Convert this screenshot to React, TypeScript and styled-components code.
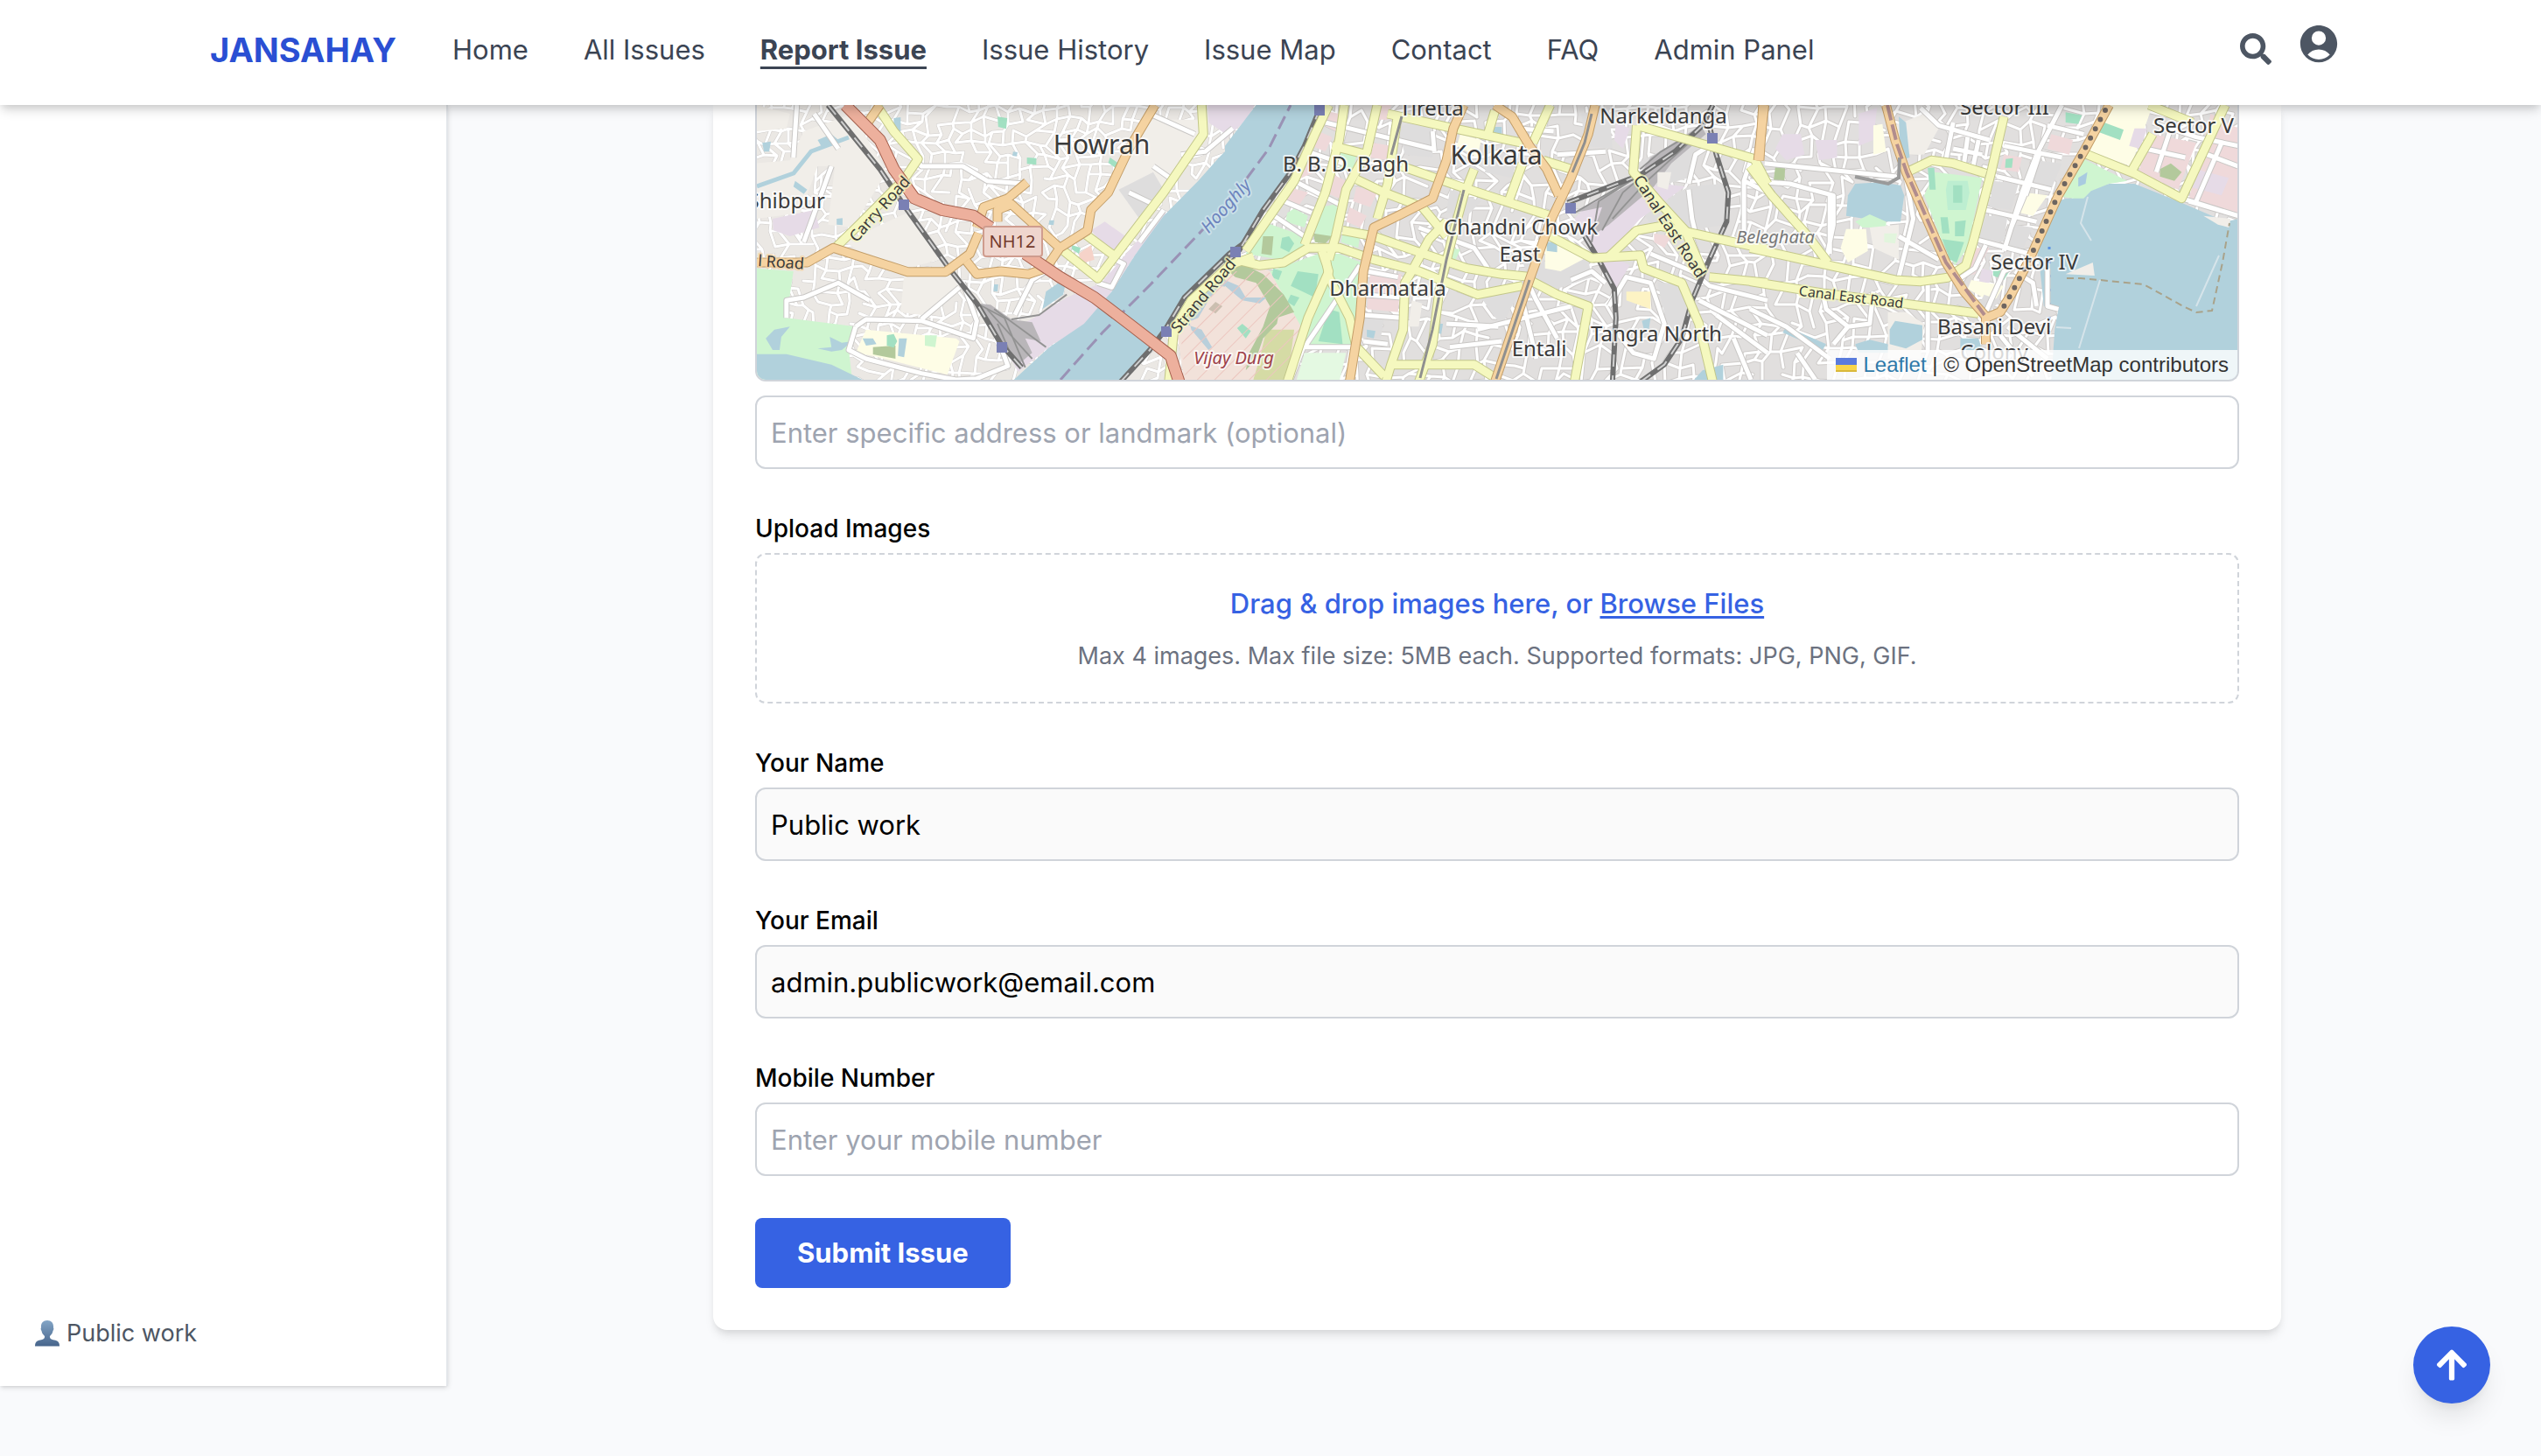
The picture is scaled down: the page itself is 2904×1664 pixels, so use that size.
import React from 'react';
import styled, { createGlobalStyle } from 'styled-components';
import { FaArrowUp, FaSearch } from 'react-icons/fa';

const GlobalStyle = createGlobalStyle`
  *, *::before, *::after { box-sizing: border-box; }
  body {
    margin: 0;
    background: #f9fafc;
    color: #000;
    font-family: Inter, "Liberation Sans", sans-serif;
    font-size: 31px;
    line-height: 48px;
  }
  button, input { font: inherit; color: inherit; }
`;

const Header = styled.header`
  position: relative;
  z-index: 10;
  height: 120px;
  background: #fff;
  box-shadow: 0 8px 12px -2px rgba(0, 0, 0, 0.14), 0 4px 8px -2px rgba(0, 0, 0, 0.1);
`;

const HeaderInner = styled.div`
  display: flex;
  align-items: center;
  max-width: 2560px;
  height: 114px;
  margin: 0 auto;
  padding: 0 56px 0 68px;
`;

const Brand = styled.a`
  margin-right: 64px;
  color: #2a4fd3;
  font-size: 38px;
  font-weight: 700;
  text-decoration: none;
`;

const Nav = styled.nav`
  display: flex;
  flex: 1;
  gap: 63px;
`;

const NavLink = styled.a<{ $active?: boolean }>`
  color: #3b4453;
  font-weight: ${(p) => (p.$active ? 700 : 400)};
  text-decoration: ${(p) => (p.$active ? 'underline' : 'none')};
  text-decoration-thickness: 3px;
  text-underline-offset: 8px;
  white-space: nowrap;
`;

const Tools = styled.div`
  display: flex;
  align-items: flex-start;
  gap: 28px;
  padding-bottom: 14px;
`;

const IconButton = styled.button`
  display: flex;
  padding: 0;
  border: 0;
  background: none;
  color: #4d5663;
  &:first-child { padding-top: 14px; }
`;

const Body = styled.div`
  display: flex;
  min-height: calc(100vh - 120px);
  padding-bottom: 80px;
`;

const Sidebar = styled.aside`
  display: flex;
  flex: none;
  flex-direction: column;
  justify-content: flex-end;
  width: 512px;
  padding: 40px;
  background: #fff;
  border-right: 2px solid #e3e6ea;
  box-shadow: 0 2px 6px rgba(0, 0, 0, 0.12), 0 2px 4px -2px rgba(0, 0, 0, 0.12);
`;

const UserLine = styled.div`
  display: flex;
  align-items: center;
  gap: 8px;
  color: #4d5663;
  font-size: 27px;
  line-height: 40px;
`;

const Main = styled.main`
  display: flex;
  flex: 1;
  flex-direction: column;
  align-items: center;
  padding: 0 0 64px 6px;
`;

const Card = styled.form`
  display: flex;
  flex-direction: column;
  gap: 48px;
  width: 100%;
  max-width: 1792px;
  padding: 0 48px 48px;
  background: #fff;
  border-radius: 0 0 16px 16px;
  box-shadow: 0 8px 12px -2px rgba(0, 0, 0, 0.1), 0 4px 8px -4px rgba(0, 0, 0, 0.1);
`;

const Location = styled.div`
  display: flex;
  flex-direction: column;
  gap: 16px;
`;

const MapFrame = styled.div`
  position: relative;
  height: 316px;
  overflow: hidden;
  border: 2px solid #d0d4da;
  border-top: 0;
  border-radius: 0 0 12px 12px;
`;

const MapDrawing = styled.svg`
  display: block;
  width: 100%;
  height: 100%;
  font-family: "Noto Sans", sans-serif;
`;

const Attribution = styled.div`
  position: absolute;
  right: 0;
  bottom: 0;
  display: flex;
  align-items: center;
  gap: 8px;
  height: 34px;
  padding: 0 10px;
  background: rgba(255, 255, 255, 0.8);
  color: #333;
  font-family: "Liberation Sans", sans-serif;
  font-size: 24px;
  line-height: 34px;
  white-space: nowrap;
  a { color: #2f79a9; text-decoration: none; }
`;

const Field = styled.div`
  display: flex;
  flex-direction: column;
  gap: 8px;
`;

const Label = styled.label`
  font-size: 28px;
  font-weight: 500;
  line-height: 40px;
`;

const TextInput = styled.input`
  width: 100%;
  height: 84px;
  padding: 16px;
  background: #fff;
  border: 2px solid #d0d4da;
  border-radius: 12px;
  outline: none;
  &::placeholder { color: #9ea4b0; opacity: 1; }
  &:read-only { background: #fafafa; }
`;

const DropZone = styled.div`
  display: flex;
  flex-direction: column;
  align-items: center;
  gap: 16px;
  padding: 32px;
  border: 2px dashed #d0d4da;
  border-radius: 12px;
  p { margin: 0; }
`;

const DropTitle = styled.p`
  color: #3662e3;
  font-weight: 500;
`;

const BrowseButton = styled.button`
  padding: 0;
  border: 0;
  background: none;
  text-decoration: underline;
  text-decoration-thickness: 3px;
  text-underline-offset: 3px;
`;

const DropHint = styled.p`
  color: #6c7280;
  font-size: 27px;
  line-height: 40px;
`;

const HiddenFile = styled.input`
  display: none;
`;

const SubmitButton = styled.button`
  align-self: flex-start;
  padding: 16px 48px;
  background: #3662e3;
  border: 0;
  border-radius: 8px;
  color: #fff;
  font-size: 31px;
  font-weight: 700;
`;

const ScrollTop = styled.button`
  position: fixed;
  right: 58px;
  bottom: 60px;
  display: flex;
  align-items: center;
  justify-content: center;
  width: 88px;
  height: 88px;
  padding: 0;
  background: #3662e3;
  border: 0;
  border-radius: 50%;
  color: #fff;
  box-shadow: 0 20px 30px -6px rgba(0, 0, 0, 0.1), 0 8px 12px -4px rgba(0, 0, 0, 0.06);
`;

/* ---------- map ---------- */

type Area = [fill: string, points: string];
type RoadKind = 'street' | 'yellow' | 'orange' | 'trunk' | 'rail' | 'track';
type Road = [kind: RoadKind, points: string];
interface Sheet {
  transform: string;
  areas: Area[];
  roads: Road[];
}

const WATER = '#b1d1dc';
const GREEN = '#cff5d0';
const PITCH = '#a2e0c2';
const BEIGE = '#f1eee9';
const GREY = '#dedddd';
const PURPLE = '#e6dbe7';
const SCHOOL = '#fefde6';
const PINK = '#efd9da';
const OLIVE = '#b3c99c';
const FORT = '#f2e2da';
const YARD = '#b9b6b9';

const west: Sheet = {
  transform: 'translate(800 110) scale(.3954 .3333)',
  areas: [
    [BEIGE, '163,230 260,220 300,120 440,60 540,260 440,450 370,440 390,240 340,240 290,400 163,420'],
    [BEIGE, '420,500 560,420 600,400 690,560 600,590 500,560'],
    [BEIGE, '590,610 720,610 750,650 640,750 580,740'],
    [BEIGE, '1290,80 1440,80 1450,130 1200,560 1100,450 1150,390 1190,330'],
    [BEIGE, '163,30 260,60 250,110 163,120'],
    [PURPLE, '210,420 330,390 345,450 260,480 212,460'],
    [PURPLE, '1468,30 1568,30 1568,90 1520,130 1470,90'],
    [PURPLE, '1340,390 1350,410 1260,540 1190,670 1110,790 1020,850 920,945 850,800 950,770 1060,690 1160,640'],
    [PURPLE, '1130,460 1170,430 1230,480 1190,540'],
    [GREY, '1260,290 1310,260 1340,320 1270,420 1210,320'],
    [GREEN, '163,590 270,600 250,760 450,790 430,870 440,972 163,972'],
    [WATER, '163,884 250,884 380,920 470,972 163,972'],
    [WATER, '190,830 215,800 260,790 235,825 230,870 210,870'],
    [WATER, '340,865 380,860 375,825 410,845 440,840 410,870 380,875'],
    [WATER, '180,160 205,155 200,190 185,190'],
    [WATER, '560,75 580,72 580,120 560,115'],
    [WATER, '340,150 380,130 400,150 350,170'],
    [WATER, '275,290 310,320 300,335 270,310'],
    [WATER, '395,420 412,418 412,442 395,440'],
    [WATER, '1010,425 1024,425 1022,442 1008,440'],
    [WATER, '905,190 918,192 915,206 903,204'],
    [WATER, '850,645 862,645 860,670 848,668'],
    [PITCH, '860,70 888,75 885,112 862,105'],
    [PITCH, '945,210 972,212 972,235 945,232'],
    [PITCH, '1185,210 1210,230 1200,245 1180,228'],
    [SCHOOL, '480,800 740,830 750,840 715,955 500,890 450,880'],
    [OLIVE, '500,860 565,855 565,900 500,885'],
    [WATER, '470,830 500,830 510,850 480,855'],
    [WATER, '575,830 598,830 590,895 572,890'],
    [PITCH, '540,820 560,815 570,840 560,862 540,855'],
    [GREEN, '650,820 685,820 680,860 650,855'],
    ['#f6d3c9', '1095,540 1130,510 1140,560 1100,575'],
    [PITCH, '1075,510 1100,520 1095,540 1075,525'],
    [WATER, '1000,670 1060,620 1050,680 990,730'],
    [YARD, '805,710 840,715 900,765 960,775 985,840 940,830 960,880 915,925 870,850'],
    [WATER, '1568,130 1500,210 1440,290 1340,410 1260,540 1190,670 1110,780 1010,860 900,980 1215,980 1300,870 1345,790 1400,690 1530,540 1600,480 1600,100'],
    [FORT, '1600,590 1530,620 1440,690 1380,820 1400,980 1600,980'],
    [OLIVE, '1470,660 1500,600 1600,580 1600,660 1530,640'],
    ['#b9cfdb', '1400,780 1440,760 1470,700 1500,650 1568,660 1568,640 1490,630 1440,700 1410,750 1420,800 1470,870 1480,860 1450,800'],
    ['#cbbfb0', '1470,730 1490,705 1510,720 1490,745'],
  ],
  roads: [
    ['street', '560,120 640,240 760,240 830,290 940,300'],
    ['street', '450,790 430,870 480,900 640,950 740,972 800,968 890,925 870,860'],
    ['street', '450,790 480,765 640,770 790,830 800,770 760,640'],
    ['street', '640,765 750,655'],
    ['street', '910,750 960,630 1000,600'],
    ['street', '1310,240 1370,290 M1240,330 1310,370 M1300,60 1430,130'],
    ['street', '1150,640 1190,655 1225,575 1200,560'],
    ['street', '250,760 250,700 300,690 400,640 490,700'],
    ['street', '1340,390 1270,500 M1390,200 1460,190 1540,110'],
    ['street', '380,240 300,500 M330,60 400,180 M280,30 270,210'],
    ['rail', '370,30 520,250 590,375 720,590 800,710 870,850 930,930'],
    ['track', '800,710 880,760 940,930 M830,730 960,900 M850,730 1000,860 M900,765 980,750 1060,680 M860,780 900,890'],
    ['rail', '1215,980 1300,870 1345,800 1400,690 1530,540 1600,480'],
    ['yellow', '510,30 560,120 630,215 590,285 460,440 395,515'],
    ['yellow', '1450,30 1455,130 1340,330 1150,625 1040,520'],
    ['yellow', '1110,470 1195,545'],
    ['yellow', '1600,550 1530,580 1420,700 1370,800 1355,980'],
    ['orange', '520,30 485,90'],
    ['orange', '163,570 310,570 385,520 600,602 710,602 780,540 805,470'],
    ['orange', '1315,30 1240,180 1180,330 1130,390 1120,460 1040,520 1000,590 950,610 870,600 800,610 770,565'],
    ['orange', '800,450 820,380 890,350 945,295'],
    ['orange', '860,430 860,390 900,370 1040,520'],
    ['trunk', '420,30 520,150 560,250 620,350 700,390 790,410 840,450'],
    ['trunk', '940,540 1040,620 1140,690 1240,780 1360,890 1385,980'],
  ],
};

const centre: Sheet = {
  transform: 'translate(1400 110) scale(.3954 .3333)',
  areas: [
    [PURPLE, '0,30 85,30 70,70 0,150'],
    [WATER, '90,30 275,30 230,170 190,260 110,390 40,520 0,570 0,170'],
    [GREY, '500,110 560,75 600,120 600,210 520,200'],
    [GREY, '770,210 840,240 830,280 750,260'],
    [GREY, '650,320 740,360 700,410 640,400'],
    [GREY, '860,570 1050,560 1060,620 960,660 880,620'],
    [GREY, '740,670 860,650 820,740 800,790 740,690'],
    [GREY, '1210,400 1340,310 1440,300 1450,440 1340,460 1230,440'],
    [GREY, '390,750 460,760 450,830 395,830'],
    [GREY, '1250,640 1330,640 1350,760 1280,800'],
    [GREY, '1030,60 1110,40 1120,180 1040,170'],
    [PINK, '290,50 330,60 320,120 270,90'],
    [PINK, '270,120 310,140 290,190 250,170'],
    [PINK, '200,240 250,210 260,260 200,290'],
    [PINK, '300,260 350,290 330,350 290,330'],
    [PINK, '180,310 240,330 210,380 160,350'],
    [PINK, '380,310 440,330 420,380 370,360'],
    [PINK, '360,380 410,410 390,450 350,430'],
    [PINK, '430,160 480,170 470,220 420,210'],
    [PINK, '420,600 510,610 500,740 410,730'],
    [PINK, '1240,470 1290,480 1270,520 1240,500'],
    [PINK, '430,30 480,30 470,80 430,80'],
    [SCHOOL, '680,130 740,150 730,210 670,170'],
    [SCHOOL, '925,500 980,500 1050,550 970,600 925,590'],
    ['#fdf3c4', '1160,670 1230,670 1230,730 1160,700'],
    [GREEN, '335,190 380,200 370,260 330,250'],
    [GREEN, '110,430 230,480 250,530 180,565 60,540'],
    [GREEN, '275,380 320,370 330,400 310,480 290,500 260,470'],
    [GREEN, '180,400 200,385 240,410 230,450 175,430'],
    [OLIVE, '255,470 310,480 290,505 260,500'],
    [PITCH, '165,485 185,480 200,505 185,535 160,520'],
    [OLIVE, '110,480 140,480 135,545 105,540'],
    [GREEN, '130,600 270,540 330,540 395,570 400,700 370,860 230,850 210,790'],
    [PITCH, '210,600 270,610 260,690 190,650'],
    [PITCH, '300,730 330,740 340,850 270,840'],
    [PITCH, '140,590 165,600 155,630 135,620'],
    [PITCH, '190,680 215,690 200,720 180,705'],
    ['#e4f9e2', '230,880 350,880 330,980 205,980'],
    [GREEN, '340,470 390,480 385,520 335,500'],
    [GREEN, '650,520 680,525 665,565 640,560'],
    [FORT, '0,600 70,570 130,600 220,790 180,980 0,980'],
    [OLIVE, '0,590 60,580 110,610 170,680 200,740 150,760 120,700 90,640 30,620'],
    ['#d5dba5', '120,800 200,800 180,980 80,980 100,900'],
    [OLIVE, '130,720 160,720 150,780 110,830 90,900 60,940 70,880 110,790'],
    ['#b9cfdb', '0,630 40,650 60,690 120,690 100,710 50,700 0,650'],
    [PITCH, '35,795 50,780 75,805 60,830'],
    [WATER, '775,105 800,105 800,140 775,135'],
    [WATER, '930,500 960,500 960,535 930,530'],
    [WATER, '410,800 435,805 430,830 410,825'],
    [WATER, '610,780 630,780 625,815 608,810'],
    [WATER, '1380,940 1440,920 1440,980 1350,980'],
    [WATER, '1205,770 1230,760 1225,800 1210,795'],
    [PURPLE, '1050,370 1200,290 1330,310 1200,420 1110,540 1170,580 1130,660 1070,530 1010,420'],
    [PURPLE, '1130,90 1170,110 1150,180 1125,150'],
    [GREY, '1190,230 1380,110 1340,280 1250,310'],
    [YARD, '1375,100 1390,130 1290,230 1240,310 1110,440 1060,480 1090,380 1010,400 1190,290 1230,210'],
    [BEIGE, '540,700 570,710 560,790 530,790'],
    [BEIGE, '1250,260 1290,260 1280,320 1250,310'],
  ],
  roads: [
    ['street', '290,90 600,180 M240,190 340,230 M200,290 330,370 M150,350 250,400 M130,400 230,480'],
    ['street', '600,120 605,190 M840,110 950,120 M610,280 700,300 M560,450 720,520 760,590'],
    ['street', '410,600 500,620 M400,680 510,690 M400,750 510,760 M400,840 470,850'],
    ['street', '880,650 900,700 960,830 M1000,630 1060,600 1100,640'],
    ['street', '1110,720 1160,620 1230,640 1270,780 1240,900 1180,880 1140,820'],
    ['street', '1340,300 1360,200 1400,170 M1340,320 1350,420 1360,470'],
    ['street', '230,860 370,860 M390,580 230,860 M230,850 190,972'],
    ['street', '1230,540 1350,600 1400,650 1568,700 M1370,700 1568,820 M1420,750 1568,880 M1470,830 1520,972'],
    ['street', '730,800 1000,720 M640,780 790,790 M650,860 800,840 M860,700 900,900'],
    ['street', '1500,290 1500,470 M1530,180 1500,290 1568,330 M1100,190 960,200'],
    ['track', '1380,110 1290,200 1170,290 1010,400 M1370,120 1240,240 1150,330 1090,460 M1350,150 1220,290 1120,420 M1200,270 1080,360 1060,500 M1360,120 1260,190 1200,250'],
    ['rail', '275,40 230,170 190,260 110,390 40,530 0,575'],
    ['rail', '990,365 1090,320 1200,270 1300,190 1380,100 1410,30'],
    ['rail', '1400,100 1420,200 1455,330 1450,430 1400,560 1350,700 1320,830 1270,920 1200,980'],
    ['rail', '1040,480 1080,560 1125,660 1130,760 1120,980'],
    ['yellow', '345,30 330,150 290,330 230,510 M440,30 410,190 350,320 320,480 300,560'],
    ['yellow', '310,170 410,200 M500,60 470,300 440,420 M470,60 660,110 860,160'],
    ['yellow', '380,285 460,330 570,380 640,480 M510,240 680,310 940,410'],
    ['yellow', '780,50 760,130 M940,30 890,160 M860,230 820,360 M720,250 690,340'],
    ['yellow', '920,220 1000,250 M1190,100 1180,260 1260,370 1330,460 1380,600'],
    ['yellow', '340,460 430,480 550,530 700,590 800,610 890,620'],
    ['yellow', '30,560 100,580 170,570 240,520 330,520 430,560 560,600 730,680 860,650'],
    ['yellow', '640,430 590,490 540,600 520,640 515,800 480,920 465,980'],
    ['yellow', '690,340 660,470 620,660 600,850 560,980'],
    ['yellow', '290,540 300,620 360,760 380,860 460,960'],
    ['yellow', '60,530 200,290 260,130 300,30'],
    ['yellow', '180,980 240,760 300,600 280,530'],
    ['yellow', '480,920 720,920 780,965'],
    ['yellow', '880,630 960,680 1050,720 1010,980'],
    ['yellow', '940,480 1060,555 1200,545 1210,590 1320,640 1370,780 1410,980'],
    ['yellow', '1110,550 1190,460 1260,445 1430,490 1568,525 M1400,620 1568,640'],
    ['yellow', '1190,100 1340,150 1530,215 1568,300'],
    ['orange', '690,30 660,110 640,220 600,350 500,410 430,450 400,600 390,760 360,980'],
    ['orange', '780,30 830,70 880,170 930,250 965,340'],
    ['orange', '1070,30 1050,130 1000,280 940,430 880,630 780,980'],
    ['orange', '1555,30 1545,220'],
  ],
};

const east: Sheet = {
  transform: 'translate(2000 110) scale(.4146 .3333)',
  areas: [
    [PURPLE, '90,130 140,130 150,200 100,220 70,180'],
    [PURPLE, '300,60 350,40 340,150 300,170'],
    [PURPLE, '180,150 240,150 240,210 190,220'],
    [SCHOOL, '340,100 365,95 375,190 340,200'],
    [BEIGE, '400,100 480,60 520,110 480,200 420,200'],
    [WATER, '410,70 430,90 440,210 415,220'],
    [WATER, '290,300 360,295 415,305 425,340 415,430 370,430 265,410 270,340'],
    [GREEN, '290,430 330,405 375,430 375,450 310,450'],
    [SCHOOL, '265,455 320,455 325,530 270,570 250,520'],
    [BEIGE, '330,450 410,440 410,560 340,520'],
    ['#e2f5dd', '370,470 405,470 400,505 370,500'],
    [OLIVE, '70,240 97,240 95,290 65,290'],
    [GREEN, '510,260 640,280 600,520 565,580 530,500 480,340'],
    [PITCH, '490,245 508,245 512,320 495,320'],
    ['#bdeed1', '545,290 600,290 605,330 595,390 545,390 540,320'],
    [PITCH, '560,305 585,305 585,365 560,365'],
    [PITCH, '525,415 545,415 550,470 530,470'],
    [PITCH, '565,430 595,425 590,480 565,480'],
    [PITCH, '530,490 590,500 570,570 550,560'],
    [GREY, '670,290 740,300 720,390 660,380'],
    [GREY, '790,220 860,230 830,320 780,300'],
    [GREY, '650,410 710,410 700,500 630,490'],
    [GREY, '730,440 780,450 750,530 710,510'],
    [SCHOOL, '760,330 820,340 780,410 745,400'],
    [PINK, '700,200 750,210 740,260 690,250'],
    [PITCH, '705,215 725,212 722,245 703,245'],
    [PINK, '830,130 890,150 880,200 820,180'],
    [PITCH, '870,55 915,65 905,95 870,90'],
    [PINK, '610,520 660,520 620,610 570,620'],
    [PURPLE, '640,590 670,600 660,640 630,640'],
    [SCHOOL, '610,630 700,650 670,710 600,660'],
    [PITCH, '670,595 715,600 700,630 670,615'],
    [GREY, '645,680 690,700 660,740 630,720'],
    [SCHOOL, '985,30 1110,30 1050,240 930,190'],
    [PITCH, '965,85 1030,115 1020,150 955,120'],
    [PURPLE, '1060,110 1095,110 1075,180 1045,170'],
    [PINK, '1110,130 1230,160 1180,320 1070,260'],
    [PINK, '1270,60 1345,110 1345,400 1210,350'],
    [PURPLE, '1230,250 1320,280 1300,340 1210,310'],
    [OLIVE, '1130,250 1160,230 1190,260 1170,290 1130,275'],
    [SCHOOL, '540,590 600,570 570,620 550,620'],
    [GREEN, '920,215 1040,290 990,300 940,330 915,355 860,345'],
    ['#a9cbe0', '905,280 930,260 925,300 905,310'],
    [WATER, '870,350 920,350 940,325 990,300 1060,300 1180,360 1310,430 1350,420 1350,980 830,980 840,800 850,730 810,720 800,600 790,520 850,360'],
    [BEIGE, '1250,410 1325,420 1320,450 1290,440'],
    [BEIGE, '870,610 945,570 950,615'],
    [BEIGE, '380,740 430,740 480,780 470,900 380,900'],
    [WATER, '400,770 475,785 475,835 430,865 385,850 385,800'],
    [WATER, '290,850 330,835 380,850 380,880 300,880'],
    [WATER, '580,830 630,830 640,870 580,870'],
    [WATER, '100,790 210,850 200,870 90,810'],
  ],
  roads: [
    ['street', '470,40 520,100 660,150 M560,180 640,200 M560,90 540,220 M600,140 590,230 M630,150 615,240'],
    ['street', '700,170 860,210 M680,275 830,320 M650,390 790,430 M620,490 770,540'],
    ['street', '860,30 790,200 750,330 700,530 M820,100 920,130 M800,190 760,340 M770,300 720,450'],
    ['street', '650,740 700,600 770,560 M560,640 620,590 650,510'],
    ['street', '1110,90 1230,140 1345,170 M1090,180 1200,210 M1160,110 1120,260 M1240,190 1345,240 M1300,160 1230,360 M1210,360 1345,410 M1190,350 1345,410'],
    ['street', '0,290 110,300 230,340 230,440 210,560 M40,230 400,275 M220,340 220,540'],
    ['street', '200,670 210,730 270,790 330,780 340,670 M270,790 230,850 M0,730 100,790 220,900 M130,880 180,972'],
    ['street', '490,640 490,870 M430,280 450,420 410,620 M410,480 520,560'],
    ['street', '820,590 820,720 850,730 M730,600 780,640 790,720 M710,790 820,900 M690,820 780,960'],
    ['yellow', '0,240 60,340 110,410 160,480 215,570'],
    ['yellow', '0,520 200,575 400,630 470,635 545,622 595,580 615,500 665,260 700,70'],
    ['yellow', '430,262 500,220 560,230 650,265'],
    ['yellow', '920,195 1060,265 1190,350 1310,30 M1055,250 1110,130 M1100,30 1160,60 1220,90'],
    ['yellow', '0,635 200,675 420,710 630,745'],
    ['orange', '40,30 22,220'],
    ['orange', '990,30 920,190 850,340 770,560 720,680 690,740 650,760 650,850'],
    ['orange', '375,30 400,150 430,260 540,570 590,670 650,755'],
  ],
};

const sheets: Sheet[] = [west, centre, east];

const roadStyle: Record<RoadKind, { casing: string; fill: string; outer: number; inner: number; dash?: string }> = {
  street: { casing: '#c9c7c5', fill: '#ffffff', outer: 7, inner: 5 },
  track: { casing: '#9b9b9b', fill: '#8f8f8f', outer: 2, inner: 1 },
  rail: { casing: '#6f6f6f', fill: '#d0d0d0', outer: 6, inner: 2, dash: '14 10' },
  yellow: { casing: '#c3c78a', fill: '#f5f8bf', outer: 11, inner: 9 },
  orange: { casing: '#c29d68', fill: '#f5d3a1', outer: 11, inner: 9 },
  trunk: { casing: '#a5604e', fill: '#edb09d', outer: 14, inner: 12 },
};
const roadOrder: RoadKind[] = ['street', 'track', 'rail', 'yellow', 'orange', 'trunk'];

/* Irregular lanes: a jittered lattice whose links are dropped at random. */
function laneNetwork(x0: number, x1: number, cell: number, seed: number): string {
  let state = seed;
  const random = () => {
    state = (state * 1664525 + 1013904223) % 4294967296;
    return state / 4294967296;
  };
  const cols = Math.ceil((x1 - x0) / cell) + 1;
  const rows = Math.ceil(330 / cell) + 1;
  const nodes: [number, number][][] = [];
  for (let r = 0; r < rows; r += 1) {
    nodes.push([]);
    for (let c = 0; c < cols; c += 1) {
      const slant = r * 3;
      nodes[r].push([
        Math.round(x0 + c * cell - (slant % cell) + (random() - 0.5) * cell * 0.8),
        Math.round(112 + r * cell + (random() - 0.5) * cell * 0.8),
      ]);
    }
  }
  let d = '';
  for (let r = 0; r < rows; r += 1) {
    for (let c = 0; c < cols; c += 1) {
      const [x, y] = nodes[r][c];
      if (c + 1 < cols && random() < 0.72) d += `M${x} ${y}L${nodes[r][c + 1][0]} ${nodes[r][c + 1][1]}`;
      if (r + 1 < rows && random() < 0.78) d += `M${x} ${y}L${nodes[r + 1][c][0]} ${nodes[r + 1][c][1]}`;
    }
  }
  return d;
}

const lanes = [laneNetwork(860, 1440, 13, 7), laneNetwork(1420, 2580, 16, 23)];

interface MapLabel {
  text: string;
  x: number;
  y: number;
  size?: number;
  rotate?: number;
  anchor?: 'start' | 'middle' | 'end';
  color?: string;
  italic?: boolean;
  halo?: string;
}

const labels: MapLabel[] = [
  { text: 'Carry Road', x: 1010, y: 243, size: 18, rotate: -48, halo: '#f5f8bf' },
  { text: 'l Road', x: 866, y: 304, size: 18, rotate: 4, anchor: 'start', halo: '#f5d3a1' },
  { text: 'Strand Road', x: 1380, y: 342, size: 18, rotate: -50, halo: '#f5f8bf' },
  { text: 'Canal East Road', x: 1903, y: 262, size: 18, rotate: 57, halo: '#f5f8bf' },
  { text: 'Canal East Road', x: 2115, y: 345, size: 16, rotate: 7, halo: '#f5f8bf' },
  { text: 'Hooghly', x: 1406, y: 240, size: 20, rotate: -48, color: '#6c83bd', italic: true, halo: '#d5e6ee' },
  { text: 'Vijay Durg', x: 1410, y: 416, size: 20, color: '#9d4048', italic: true },
  { text: 'Beleghata', x: 2029, y: 278, size: 20, color: '#777777', italic: true },
  { text: 'Howrah', x: 1259, y: 176, size: 30 },
  { text: 'Kolkata', x: 1710, y: 188, size: 30 },
  { text: 'Shibpur', x: 943, y: 238, anchor: 'end' },
  { text: 'Tiretta', x: 1636, y: 132 },
  { text: 'B. B. D. Bagh', x: 1538, y: 196 },
  { text: 'Narkeldanga', x: 1901, y: 141 },
  { text: 'Chandni Chowk', x: 1738, y: 268 },
  { text: 'East', x: 1737, y: 299 },
  { text: 'Dharmatala', x: 1586, y: 338 },
  { text: 'Entali', x: 1759, y: 407 },
  { text: 'Tangra North', x: 1893, y: 390 },
  { text: 'Sector III', x: 2291, y: 131 },
  { text: 'Sector V', x: 2507, y: 152 },
  { text: 'Sector IV', x: 2325, y: 308 },
  { text: 'Basani Devi', x: 2279, y: 382 },
  { text: 'Colony', x: 2279, y: 411 },
];

const stations: [number, number][] = [
  [1033, 234], [1145, 397], [1333, 379], [1412, 288], [1508, 126], [1795, 238], [1957, 158],
];

const toPath = (points: string) =>
  (points.startsWith('M') ? points : `M${points}`).replace(/ (?=\d)/g, ' L');

function CityMap() {
  return (
    <MapDrawing viewBox="865 120 1692 314" preserveAspectRatio="xMidYMax slice" role="img" aria-label="Map of Kolkata">
      <defs>
        <pattern id="hatch" width="14" height="14" patternUnits="userSpaceOnUse" patternTransform="rotate(45)">
          <path d="M0 0V14" stroke="#ecc6bf" strokeWidth="2" />
        </pattern>
      </defs>
      <rect x="860" y="110" width="580" height="330" fill="#ebe8e4" />
      <rect x="1430" y="110" width="1130" height="330" fill="#e1dfde" />
      {lanes.map((d, i) => (
        <g key={i} fill="none" strokeLinecap="round">
          <path d={d} stroke="#cfccca" strokeWidth={i ? 5 : 4} />
          <path d={d} stroke="#fff" strokeWidth={3} />
        </g>
      ))}
      {sheets.map((sheet) => (
        <g key={sheet.transform} transform={sheet.transform}>
          {sheet.areas.map(([fill, points]) => (
            <polygon key={points} points={points} fill={fill} />
          ))}
        </g>
      ))}
      <path d="M1345 345L1400 310 1450 310 1488 375 1470 434 1355 434Z" fill="url(#hatch)" />
      <path d="M865 213L907 198 927 173 970 157" fill="none" stroke={WATER} strokeWidth="5" />
      <path d="M1212 434L1260 380 1315 325 1375 262 M1424 205L1450 170 1475 120" fill="none" stroke="#9a92b5" strokeWidth="3" strokeDasharray="16 7" />
      <path d="M2362 318L2378 318 2400 320 2450 325 2495 350 2510 357 2528 355 2540 300 2548 255" fill="none" stroke="#a9a28a" strokeWidth="2" strokeDasharray="8 5" />
      <path d="M2386 225L2378 255 2390 275 M2400 320L2376 398 M2536 292L2510 350 M2350 374L2367 375" fill="none" stroke="#d6e4ea" strokeWidth="2" />
      <path d="M2342 282V380" stroke="#5c93e0" strokeWidth="3" strokeDasharray="3 13" />
      {roadOrder.map((kind) => {
        const look = roadStyle[kind];
        return [look.casing, look.fill].map((stroke, pass) => (
          <g
            key={kind + pass}
            fill="none"
            stroke={stroke}
            strokeWidth={pass ? look.inner : look.outer}
            strokeDasharray={pass ? look.dash : undefined}
            strokeLinejoin="round"
          >
            {sheets.map((sheet) => (
              <g key={sheet.transform} transform={sheet.transform}>
                {sheet.roads
                  .filter(([k]) => k === kind)
                  .map(([, points]) => (
                    <path key={points} d={toPath(points)} vectorEffect="non-scaling-stroke" />
                  ))}
              </g>
            ))}
          </g>
        ));
      })}
      <path
        d="M1602 133L1590 177 M1673 217L1653 297 1637 377 1623 432 M1819 130L1811 163 1797 197 M1748 320L1710 433"
        fill="none"
        stroke="#8f8f8f"
        strokeWidth="3"
      />
      <path d="M2120 202L2158 210 2170 203 2171 180" fill="none" stroke="#9a9a9a" strokeWidth="4" />
      <path d="M2157 120L2168 165 2179 197 2224 300 2268 360" fill="none" stroke="#b18d8d" strokeWidth="4" strokeDasharray="18 5" />
      <path d="M2406 126L2381 173 2352 223 2319 297 2298 337 2286 357" fill="none" stroke="#6d6560" strokeWidth="6" strokeLinecap="round" strokeDasharray="0 12" />
      {stations.map(([x, y]) => (
        <rect key={x} x={x - 6} y={y - 6} width="12" height="12" fill="#7a80b4" />
      ))}
      <g>
        <rect x="1124" y="259" width="67" height="34" rx="3" fill="#efd5cd" stroke="#cf9c8e" strokeWidth="2" />
        <text x="1157" y="283" fontSize="20" textAnchor="middle" fill="#733a2c">NH12</text>
      </g>
      {labels.map((l) => (
        <text
          key={l.text + l.x}
          x={l.x}
          y={l.y}
          transform={l.rotate ? `rotate(${l.rotate} ${l.x} ${l.y})` : undefined}
          fontSize={l.size ?? 24}
          fontStyle={l.italic ? 'italic' : 'normal'}
          textAnchor={l.anchor ?? 'middle'}
          fill={l.color ?? '#3a3a3a'}
          stroke={l.halo ?? '#ffffff'}
          strokeOpacity="0.7"
          strokeWidth="4"
          strokeLinejoin="round"
          paintOrder="stroke"
        >
          {l.text}
        </text>
      ))}
    </MapDrawing>
  );
}

/* ---------- icons ---------- */

const AccountIcon = () => (
  <svg width="52" height="52" viewBox="0 0 24 24" fill="currentColor" fillRule="evenodd" aria-hidden="true">
    <path d="M18.685 19.097A9.723 9.723 0 0021.75 12c0-5.385-4.365-9.75-9.75-9.75S2.25 6.615 2.25 12a9.723 9.723 0 003.065 7.097A9.716 9.716 0 0012 21.75a9.716 9.716 0 006.685-2.653zm-12.54-1.285A7.486 7.486 0 0112 15a7.486 7.486 0 015.855 2.812A8.224 8.224 0 0112 20.25a8.224 8.224 0 01-5.855-2.438zM15.75 9a3.75 3.75 0 11-7.5 0 3.75 3.75 0 017.5 0z" />
  </svg>
);

const PersonIcon = () => (
  <svg width="28" height="30" viewBox="0 0 28 30" aria-hidden="true">
    <defs>
      <linearGradient id="person" x1="0" y1="0" x2="0" y2="1">
        <stop offset="0" stopColor="#83a5c6" />
        <stop offset="1" stopColor="#47658c" />
      </linearGradient>
    </defs>
    <path
      d="M14 0C9 0 6.500 3.500 7 8.500C6.300 9 6.600 11 7.500 12C8 15 9.500 16.500 11 18C11.500 21 9.500 22 6 22.500C2 23 0 25 0 29.500H28C28 25 26 23 22 22.500C18.500 22 16.500 21 17 18C18.500 16.500 20 15 20.500 12C21.400 11 21.700 9 21 8.500C21.500 3.500 19 0 14 0Z"
      fill="url(#person)"
    />
  </svg>
);

/* ---------- page ---------- */

const navItems = [
  'Home', 'All Issues', 'Report Issue', 'Issue History', 'Issue Map', 'Contact', 'FAQ', 'Admin Panel',
];

export default function App() {
  return (
    <>
      <GlobalStyle />
      <Header>
        <HeaderInner>
          <Brand href="#">JANSAHAY</Brand>
          <Nav>
            {navItems.map((item) => (
              <NavLink key={item} href="#" $active={item === 'Report Issue'}>{item}</NavLink>
            ))}
          </Nav>
          <Tools>
            <IconButton type="button" aria-label="Search"><FaSearch size={36} /></IconButton>
            <IconButton type="button" aria-label="Account"><AccountIcon /></IconButton>
          </Tools>
        </HeaderInner>
      </Header>
      <Body>
        <Sidebar>
          <UserLine><PersonIcon />Public work</UserLine>
        </Sidebar>
        <Main>
          <Card onSubmit={(e) => e.preventDefault()}>
            <Location>
              <MapFrame>
                <CityMap />
                <Attribution>
                  <svg width="24" height="16" viewBox="0 0 12 8" aria-hidden="true">
                    <path fill="#5a7bdc" d="M0 0h12v4H0z" />
                    <path fill="#f8d549" d="M0 4h12v3H0z" />
                    <path fill="#d9b93c" d="M0 7h12v1H0z" />
                  </svg>
                  <span><a href="#">Leaflet</a> | © OpenStreetMap contributors</span>
                </Attribution>
              </MapFrame>
              <TextInput aria-label="Address" placeholder="Enter specific address or landmark (optional)" />
            </Location>
            <Field>
              <Label htmlFor="images">Upload Images</Label>
              <DropZone>
                <DropTitle>
                  Drag &amp; drop images here, or <BrowseButton type="button">Browse Files</BrowseButton>
                </DropTitle>
                <DropHint>Max 4 images. Max file size: 5MB each. Supported formats: JPG, PNG, GIF.</DropHint>
                <HiddenFile id="images" type="file" multiple accept="image/*" />
              </DropZone>
            </Field>
            <Field>
              <Label htmlFor="name">Your Name</Label>
              <TextInput id="name" readOnly value="Public work" />
            </Field>
            <Field>
              <Label htmlFor="email">Your Email</Label>
              <TextInput id="email" type="email" readOnly value="admin.publicwork@email.com" />
            </Field>
            <Field>
              <Label htmlFor="mobile">Mobile Number</Label>
              <TextInput id="mobile" type="tel" placeholder="Enter your mobile number" />
            </Field>
            <SubmitButton type="submit">Submit Issue</SubmitButton>
          </Card>
        </Main>
      </Body>
      <ScrollTop type="button" aria-label="Back to top"><FaArrowUp size={40} /></ScrollTop>
    </>
  );
}
